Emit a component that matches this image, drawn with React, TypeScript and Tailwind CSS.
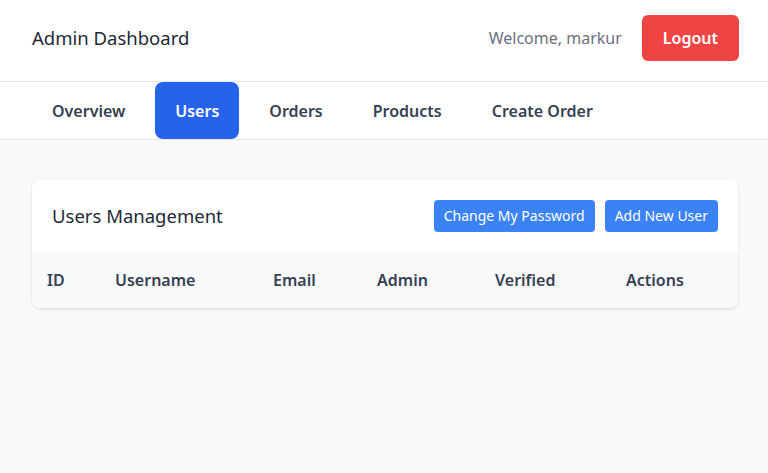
import React from 'react';

const TABS = ['Overview', 'Users', 'Orders', 'Products', 'Create Order'];
const COLUMNS = [
  { label: 'ID', w: 'w-[68px]' },
  { label: 'Username', w: 'w-[158px]' },
  { label: 'Email', w: 'w-[104px]' },
  { label: 'Admin', w: 'w-[118px]' },
  { label: 'Verified', w: 'w-[131px]' },
  { label: 'Actions', w: 'w-[127px]' },
];

const App: React.FC = () => {
  return (
    <div className="min-h-screen bg-[#f8f9fb] font-['Noto_Sans',sans-serif]">
      <header className="bg-white border-b border-[#e5e7eb]">
        <div className="pl-8 pr-[29px] pt-[15px] pb-5 flex items-center justify-between">
          <h1 className="text-[18.5px] text-[#1f2937]">Admin Dashboard</h1>
          <div className="flex items-center gap-5">
            <span className="text-base text-[#6b7280]">Welcome, markur</span>
            <button className="h-[46px] px-[21px] bg-[#ef4444] text-white font-semibold rounded-md">Logout</button>
          </div>
        </div>
      </header>

      <nav className="bg-white border-b border-[#e5e7eb]">
        <div className="px-8 flex gap-2.5">
          {TABS.map((tab) => (
            <button
              key={tab}
              className={
                tab === 'Users'
                  ? 'h-[57px] px-5 rounded-lg bg-[#2563eb] text-white font-semibold'
                  : 'h-[57px] px-5 rounded-lg text-[#374151] font-semibold'
              }
            >
              {tab}
            </button>
          ))}
        </div>
      </nav>

      <main className="pl-8 pr-[30px] pt-10">
        <div className="bg-white rounded-lg shadow overflow-hidden">
          <div className="p-5 flex items-center justify-between">
            <h2 className="text-[18.5px] text-[#1f2937]">Users Management</h2>
            <div className="flex gap-2.5">
              <button className="px-2.5 py-1.5 text-sm bg-[#3b82f6] text-white rounded">Change My Password</button>
              <button className="px-2.5 py-1.5 text-sm bg-[#3b82f6] text-white rounded">Add New User</button>
            </div>
          </div>
          <table className="w-full text-left table-fixed">
            <thead className="bg-[#f8f9fb]">
              <tr>
                {COLUMNS.map((c) => (
                  <th key={c.label} className={`${c.w} px-[15px] h-14 font-semibold text-[#374151]`}>
                    {c.label}
                  </th>
                ))}
              </tr>
            </thead>
          </table>
        </div>
      </main>
    </div>
  );
};

export default App;
